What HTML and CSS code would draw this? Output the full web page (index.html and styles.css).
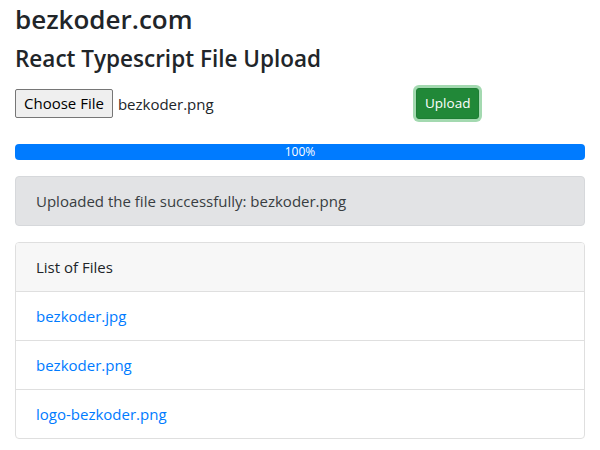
FILE: index.html
```html
<!DOCTYPE html>
<html lang="en">
<head>
<meta charset="utf-8">
<title>React Typescript File Upload</title>
<link rel="stylesheet" href="styles.css">
</head>
<body>
<div class="page">
  <h1 class="site-title">bezkoder.com</h1>
  <h2 class="page-title">React Typescript File Upload</h2>
  <div class="upload-row">
    <div class="file-col">
      <span class="file-btn">Choose File</span>
      <span class="file-name">bezkoder.png</span>
    </div>
    <div class="action-col">
      <button class="btn-upload" type="button">Upload</button>
    </div>
  </div>
  <div class="progress">
    <div class="progress-bar" style="width: 100%">100%</div>
  </div>
  <div class="alert">Uploaded the file successfully: bezkoder.png</div>
  <div class="card">
    <div class="card-header">List of Files</div>
    <ul class="file-list">
      <li class="file-item"><a href="#">bezkoder.jpg</a></li>
      <li class="file-item"><a href="#">bezkoder.png</a></li>
      <li class="file-item"><a href="#">logo-bezkoder.png</a></li>
    </ul>
  </div>
</div>
</body>
</html>
```
FILE: styles.css
```css
* { box-sizing: border-box; }
html, body { margin: 0; padding: 0; background: #fff; }
body {
  font-family: "Open Sans", "Noto Sans", sans-serif;
  font-size: 15px;
  line-height: 24px;
  color: #212529;
}
.page { padding: 0 15px; }
.site-title {
  margin: 3px 0 0;
  font-size: 26px;
  line-height: 32px;
  font-weight: 600;
}
.page-title {
  margin: 9px 0 0;
  font-size: 22.5px;
  line-height: 30px;
  font-weight: 600;
}
.upload-row {
  display: grid;
  grid-template-columns: 370px 1fr;
  column-gap: 30px;
  align-items: center;
  margin-top: 14px;
  height: 31px;
}
.file-col { display: flex; align-items: center; }
.file-btn {
  display: inline-block;
  height: 29px;
  line-height: 27px;
  padding: 0 8px;
  background: #efefef;
  border: 1px solid #767676;
  border-radius: 2px;
  color: #000;
}
.file-name { margin-left: 5px; color: #212529; }
.btn-upload {
  margin-left: 1px;
  height: 31px;
  padding: 0 8px;
  font-family: inherit;
  font-size: 13.5px;
  line-height: 21px;
  color: #fff;
  background: #218838;
  border: 1px solid #1e7e34;
  border-radius: 3px;
  box-shadow: 0 0 0 3px rgba(72, 180, 97, 0.5);
}
.progress {
  margin-top: 25px;
  height: 16px;
  background: #e9ecef;
  border-radius: 4px;
  overflow: hidden;
  display: flex;
}
.progress-bar {
  background: #007bff;
  color: #fff;
  font-size: 12px;
  line-height: 16px;
  text-align: center;
}
.alert {
  margin-top: 16px;
  padding: 12px 20px;
  background: #e2e3e5;
  border: 1px solid #d6d8db;
  border-radius: 4px;
  color: #383d41;
}
.card {
  margin-top: 16px;
  border: 1px solid #dfdfdf;
  border-radius: 4px;
  overflow: hidden;
}
.card-header {
  padding: 12px 20px;
  background: #f7f7f7;
  border-bottom: 1px solid #dfdfdf;
}
.file-list { list-style: none; margin: 0; padding: 0; }
.file-item { padding: 12px 20px; border-top: 1px solid #dfdfdf; }
.file-item:first-child { border-top: 0; }
.file-item a { color: #007bff; text-decoration: none; }
```
